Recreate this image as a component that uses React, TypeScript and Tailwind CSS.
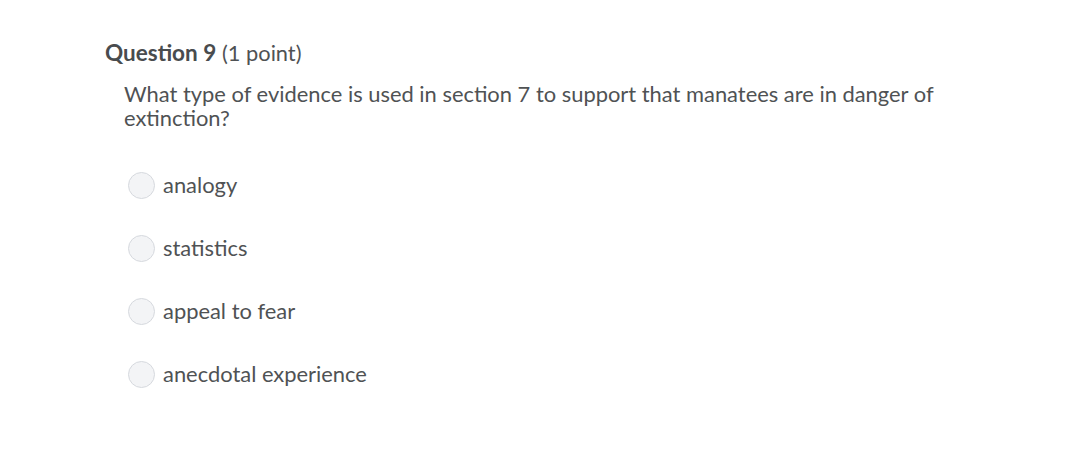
const options = ["analogy", "statistics", "appeal to fear", "anecdotal experience"]

function App() {
  return (
    <div className="w-[1067px] h-[453px] bg-white text-[#4f5254]" style={{ fontFamily: "Lato, 'Open Sans', sans-serif" }}>
      <div className="pl-[105px] pt-[38px]">
        <h2 className="text-[22.5px] leading-[30px]">
          <span className="font-bold text-[#494c4e]">Question 9</span> <span className="text-[21.8px]">(1 point)</span>
        </h2>
        <div className="pl-[19px] pt-[14px]">
          <p className="text-[21.9px] leading-[24px] max-w-[830px]">
            What type of evidence is used in section 7 to support that manatees are in danger of extinction?
          </p>
          <div className="flex flex-col gap-[35px] pt-[41px] pl-[4px]">
            {options.map(opt => (
              <label key={opt} className="flex items-center gap-[8px] h-[28px]">
                <span className="block size-[27px] rounded-full border border-[#d6d9de] bg-[#f3f4f6]"></span>
                <span className="text-[21.9px] leading-[24px]">{opt}</span>
              </label>
            ))}
          </div>
        </div>
      </div>
    </div>
  )
}

export default App
